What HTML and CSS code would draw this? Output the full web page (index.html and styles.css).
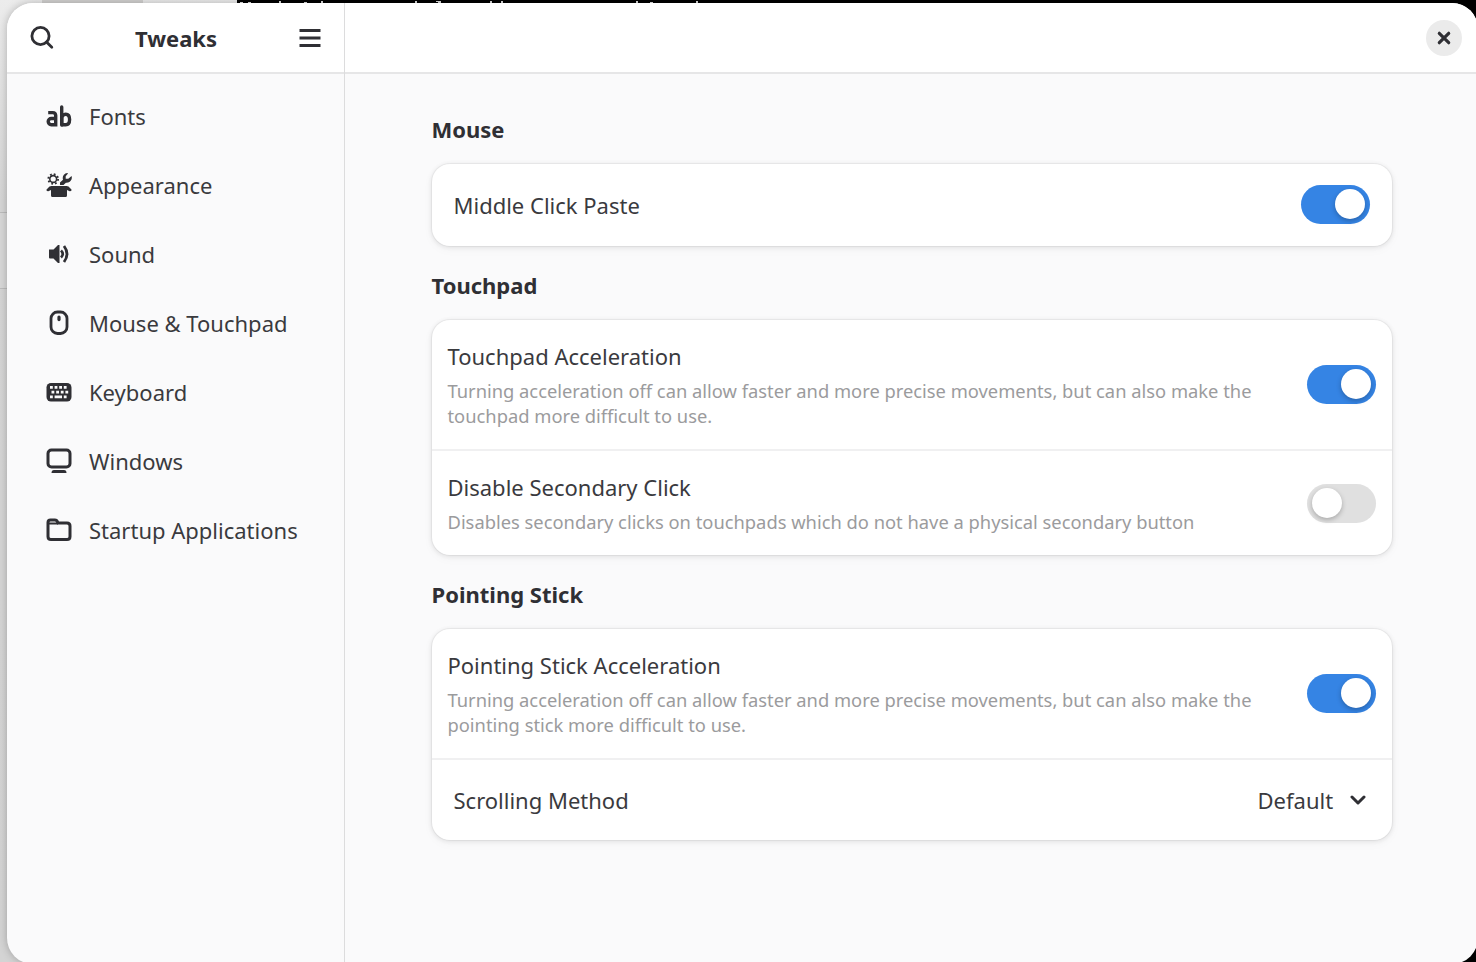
FILE: index.html
```html
<!DOCTYPE html>
<html lang="en">
<head>
<meta charset="utf-8">
<title>Tweaks</title>
<link rel="stylesheet" href="styles.css">
</head>
<body>
<div class="desktop">
  <div class="back-window" aria-hidden="true"><div class="back-tab"></div><div class="back-row"></div></div>
  <svg class="terminal-line" width="480" height="3" aria-hidden="true"><path d="M3 2h3v1h-3zM11 2h3v1h-3zM42 1h2v2h-2zM67 2h3v1h-3zM84 1h2v2h-2zM178 1h2v2h-2zM199 1h5v2h-3v-1h-2zM253 1h2v2h-2zM264 1h2v2h-2zM399 1h2v2h-2zM413 2h3v1h-3zM459 1h2v2h-2z" fill="#ddd"/></svg>
  <div class="window">
    <aside class="sidebar">
      <header class="bar sidebar-bar">
        <button class="icon-button" type="button" aria-label="Search">
          <svg width="24" height="24" viewBox="0 0 24 24" fill="none" stroke="currentColor" stroke-width="2.800"><circle cx="10.500" cy="10" r="8.600"/><path d="M16.500 16l5.300 5.300" stroke-linecap="round"/></svg>
        </button>
        <h1 class="window-title">Tweaks</h1>
        <button class="icon-button" type="button" aria-label="Main menu">
          <svg width="24" height="24" viewBox="0 0 24 24" fill="currentColor"><path d="M1.500 3h21v3h-21zM1.500 10.500h21v3h-21zM1.500 18h21v3h-21z"/></svg>
        </button>
      </header>
      <nav class="nav">
        <a class="nav-item" href="#fonts"><svg class="nav-icon" viewBox="0 0 26 26" fill="none" stroke="currentColor" stroke-width="3.400"><path d="M2.200 9.600h4.500q3 0 3 3v9.100H5.300a3 3 0 0 1 0-6.200h4.200"/><path d="M15.700 21.700V15.500a4 4 0 0 1 4-4.200q3.900 0 3.900 5.200t-3.900 5.200h-4"/><path d="M15.700 4v18" stroke-linecap="round"/></svg>Fonts</a>
        <a class="nav-item" href="#appearance"><svg class="nav-icon" viewBox="0 0 26 26" fill="currentColor"><circle cx="7.200" cy="7" r="3.400" fill="none" stroke="currentColor" stroke-width="1.600"/><circle cx="7.200" cy="7" r="4.900" fill="none" stroke="currentColor" stroke-width="1.800" stroke-dasharray="1.800 2.050"/><path d="M14 13v-2.500l3-2.800c-1-3 .7-6.300 4.300-6.700l.7.400-2.300 2.800v2.600h2.600L25.600 4c1 3.500-1.500 7.300-5.700 6.700L17.500 13z"/><path d="M5.500 14h15l2 .6 3 2.900q.5 1.900-1.800 1.700L21 18v5.500q0 1.500-1.500 1.500h-13Q5 25 5 23.500V18l-2.700 1.200Q0 19.400.5 17.500l3-2.900z"/></svg>Appearance</a>
        <a class="nav-item" href="#sound"><svg class="nav-icon" viewBox="0 0 26 26" fill="none" stroke="currentColor"><path d="M3 8.500h4.500L12 4h1.500v18H12l-4.500-4.500H4q-1 0-1-1z" fill="currentColor" stroke="none"/><path d="M15 9.500q3.500 3.500 0 7" stroke-width="2.600"/><path d="M18 5q6 8 0 16" stroke-width="2.800"/></svg>Sound</a>
        <a class="nav-item" href="#mouse"><svg class="nav-icon" viewBox="0 0 26 26" fill="none" stroke="currentColor" stroke-width="2.800"><rect x="5" y="2" width="16" height="21.500" rx="6.500"/><path d="M13 7v2.600" stroke-width="3.200" stroke-linecap="round"/></svg>Mouse &amp; Touchpad</a>
        <a class="nav-item" href="#keyboard"><svg class="nav-icon" viewBox="0 0 26 26"><rect x=".5" y="4" width="25" height="18.500" rx="4.500" fill="currentColor"/><path d="M4 7h2.800v2.800H4zM8.600 7h2.800v2.800H8.600zM13.200 7H16v2.800h-2.800zM17.800 7h2.800v2.800h-2.800zM5.500 11.700h2.800v2.800H5.500zM10.200 11.700H13v2.800h-2.800zM14.800 11.700h2.800v2.800h-2.800zM19.400 11.700h2.800v2.800h-2.800zM4 16.400h2.800v2.800H4zM8.600 16.400H16v2.800H8.600zM17.800 16.400h2.800v2.800h-2.800z" fill="#fafafb"/></svg>Keyboard</a>
        <a class="nav-item" href="#windows"><svg class="nav-icon" viewBox="0 0 26 26" fill="none" stroke="currentColor" stroke-width="3"><rect x="2" y="2" width="22" height="17" rx="3.500"/><path d="M8 22h10q2.500 0 2.500 3h-15q0-3 2.500-3z" fill="currentColor" stroke="none"/></svg>Windows</a>
        <a class="nav-item" href="#startup"><svg class="nav-icon" viewBox="0 0 26 26" fill="none" stroke="currentColor" stroke-width="3"><path d="M2 7V5.500Q2 3 4.500 3H9q1.600 0 2.300 1.500l.7 1.500h9q3 0 3 3v10.500q0 3-3 3H5q-3 0-3-3z"/><path d="M3 6.500h9" stroke-width="2"/></svg>Startup Applications</a>
      </nav>
    </aside>
    <main class="content">
      <header class="bar content-bar">
        <button class="close-button" type="button" aria-label="Close"><svg width="14" height="14" viewBox="0 0 14 14" stroke="currentColor" stroke-width="3.200" stroke-linecap="round"><path d="M2.300 2.300l9.400 9.400M11.700 2.300l-9.400 9.400"/></svg></button>
      </header>
      <div class="page">
        <section class="group">
          <h2 class="group-title">Mouse</h2>
          <div class="card">
            <div class="row row-single"><label class="row-title" for="paste">Middle Click Paste</label><input class="switch" type="checkbox" id="paste" checked></div>
          </div>
        </section>
        <section class="group">
          <h2 class="group-title">Touchpad</h2>
          <div class="card">
            <div class="row">
              <div class="row-text"><label class="row-title" for="touchpad">Touchpad Acceleration</label><p class="row-note">Turning acceleration off can allow faster and more precise movements, but can also make the touchpad more difficult to use.</p></div>
              <input class="switch" type="checkbox" id="touchpad" checked>
            </div>
            <div class="row">
              <div class="row-text"><label class="row-title" for="secondary">Disable Secondary Click</label><p class="row-note">Disables secondary clicks on touchpads which do not have a physical secondary button</p></div>
              <input class="switch" type="checkbox" id="secondary">
            </div>
          </div>
        </section>
        <section class="group">
          <h2 class="group-title">Pointing Stick</h2>
          <div class="card">
            <div class="row">
              <div class="row-text"><label class="row-title" for="stick">Pointing Stick Acceleration</label><p class="row-note">Turning acceleration off can allow faster and more precise movements, but can also make the pointing stick more difficult to use.</p></div>
              <input class="switch" type="checkbox" id="stick" checked>
            </div>
            <div class="row row-single"><label class="row-title" for="scrolling">Scrolling Method</label>
              <div class="picker"><select class="select" id="scrolling"><option>Default</option></select><svg width="16" height="12" viewBox="0 0 16 12" fill="none" stroke="currentColor" stroke-width="3" stroke-linecap="round" stroke-linejoin="round"><path d="M2 3l6 6 6-6"/></svg></div>
            </div>
          </div>
        </section>
      </div>
    </main>
  </div>
</div>
</body>
</html>
```
FILE: styles.css
```css
* { box-sizing: border-box; }
body {
  margin: 0;
  background: #000;
  color: #3a3a3e;
  font-family: "Noto Sans", sans-serif;
  font-size: 22px;
  line-height: 30px;
  overflow: hidden;
}
h1, h2, p { margin: 0; font-size: inherit; }
button, select, input { font: inherit; color: inherit; margin: 0; border: 0; padding: 0; }
svg, h1, h2 { color: #2f2f34; }
.desktop {
  position: relative;
  display: flex;
  min-height: calc(100vh + 2px);
  padding: 3px 0 0 7px;
  margin-right: -2px;
}
.back-window {
  position: absolute;
  left: 0;
  top: 0;
  bottom: 0;
  width: 237px;
  background: linear-gradient(#ececec, #d6d6d6 200px, #d4d4d4);
}
.back-tab {
  margin-left: 42px;
  width: 101px;
  height: 3px;
  background: #d2d1d0;
}
.back-row {
  margin-top: 209px;
  height: 77px;
  border: solid #bcbcbc;
  border-width: 1px 0;
  background: #d8d8d8;
}
.terminal-line { position: absolute; left: 237px; top: 0; }
.window {
  position: relative;
  flex: 1;
  display: flex;
  border-radius: 26px;
  overflow: hidden;
  background: #fafafb;
  box-shadow: 0 0 8px rgba(0, 0, 0, .25);
}
.sidebar { flex: none; width: 338px; border-right: 1px solid #dcdcdd; }
.content { flex: 1; min-width: 0; }
.bar {
  display: flex;
  align-items: center;
  height: 71px;
  background: #fff;
  border-bottom: 2px solid #e6e6e7;
}
.sidebar-bar { justify-content: space-between; padding: 0 22px 0 23px; }
.content-bar { justify-content: flex-end; padding: 0 16px; }
.icon-button { display: flex; background: none; }
.window-title { font-weight: 700; }
.close-button {
  display: grid;
  place-items: center;
  width: 36px;
  height: 36px;
  border-radius: 50%;
  background: #ebebeb;
}
.nav { padding: 7px 9px; }
.nav-item {
  display: flex;
  align-items: center;
  gap: 17px;
  height: 69px;
  padding: 0 30px;
  color: inherit;
  text-decoration: none;
  white-space: nowrap;
}
.nav-icon { flex: none; width: 26px; height: 26px; }
.page {
  max-width: 960px;
  margin: 0 auto;
  padding: 40px 0;
}
.group { margin-bottom: 24px; }
.group-title { font-weight: 700; margin-bottom: 20px; }
.card {
  border-radius: 18px;
  background: #fff;
  box-shadow: 0 0 0 1px rgba(0, 0, 0, .04), 0 1px 4px 1px rgba(0, 0, 0, .08), 0 3px 9px 3px rgba(0, 0, 0, .02);
}
.row {
  display: flex;
  align-items: center;
  justify-content: space-between;
  gap: 48px;
  padding: 21px 16px;
}
.row + .row { border-top: 2px solid #f0f0f1; }
.row-single { min-height: 82px; padding: 0 22px 1px; }
.row-text { flex: 1; }
.row-title { display: block; }
.row-note { margin-top: 7px; font-size: smaller; line-height: 25px; color: #9b9b9d; }
.switch {
  appearance: none;
  flex: none;
  width: 69px;
  height: 39px;
  padding: 4px 5px;
  border-radius: 20px;
  background: #e0e0e0;
}
.switch::before {
  content: "";
  display: block;
  width: 30px;
  height: 30px;
  border-radius: 50%;
  background: #fff;
  box-shadow: 0 2px 5px rgba(0, 0, 0, .25);
}
.switch:checked { background: #3584e4; }
.switch:checked::before { margin-left: auto; }
.picker { display: flex; align-items: center; gap: 16px; padding-right: 4px; }
.select { appearance: none; background: none; }
```
